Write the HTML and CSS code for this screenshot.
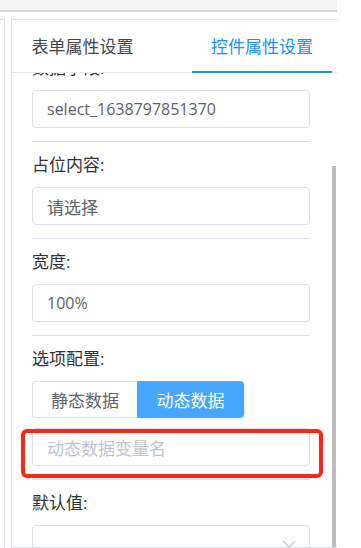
FILE: index.html
```html
<!DOCTYPE html>
<html lang="zh">
<head>
<meta charset="utf-8">
<link rel="stylesheet" href="styles.css">
</head>
<body>
<div class="app">
  <div class="topbar"></div>
  <div class="main">
    <div class="side"></div>
    <div class="panel">
      <div class="tabs">
        <div class="tab">表单属性设置</div>
        <div class="tab active">控件属性设置</div>
      </div>
      <div class="scroll">
        <div class="content">
          <div class="item">
            <div class="label">数据字段:</div>
            <div class="input latin">select_1638797851370</div>
          </div>
          <div class="item">
            <div class="label">占位内容:</div>
            <div class="input">请选择</div>
          </div>
          <div class="item">
            <div class="label">宽度:</div>
            <div class="input latin">100%</div>
          </div>
          <div class="item">
            <div class="label">选项配置:</div>
            <div class="radio-group">
              <div class="radio">静态数据</div>
              <div class="radio on">动态数据</div>
            </div>
            <div class="input placeholder">动态数据变量名</div>
          </div>
          <div class="item">
            <div class="label">默认值:</div>
            <div class="input select">
              <span></span>
              <svg class="chev" width="12" height="7" viewBox="0 0 12 7"><polyline points="0.5,0.5 6,6 11.5,0.5" fill="none" stroke="#c0c4cc" stroke-width="1.2"/></svg>
            </div>
          </div>
        </div>
        <div class="thumb"></div>
      </div>
    </div>
  </div>
</div>
<div class="highlight"></div>
</body>
</html>
```

FILE: styles.css
```css
* { box-sizing: border-box; }
html, body { margin: 0; padding: 0; background: #fff; }
body {
  width: 361px;
  height: 548px;
  overflow: hidden;
  position: relative;
  font-family: "Open Sans", "Noto Sans CJK SC", sans-serif;
  font-size: 17px;
}
.app {
  width: 337px;
  height: 548px;
  overflow: hidden;
}
.topbar {
  height: 12px;
  background: #f5f5f5;
  border-bottom: 2px solid #d3d3d3;
}
.main {
  display: flex;
  margin-top: 7px;
  height: 529px;
}
.side {
  flex: 0 0 5px;
  border-top: 1px solid #dcdfe6;
  border-right: 1px solid #dcdfe6;
  margin-right: 6px;
}
.panel {
  flex: 0 0 340px;
  border: 1px solid #dcdfe6;
  display: flex;
  flex-direction: column;
}
.tabs {
  display: flex;
  height: 53px;
  border-bottom: 1px solid #e4e7ed;
}
.tab {
  height: 53px;
  margin-bottom: -1px;
  padding-top: 4px;
  line-height: 46px;
  text-align: center;
  color: #444;
  border-bottom: 2px solid transparent;
  width: 141px;
}
.tab.active {
  width: 140px;
  margin-left: 39px;
  color: #1890ff;
  border-bottom-color: #1890ff;
}
.scroll {
  flex: 1;
  overflow: hidden;
  position: relative;
}
.content {
  margin-top: -29px;
  padding: 0 20px;
  width: 318px;
}
.item {
  border-top: 1px solid #dcdfe6;
  padding: 11px 0 13px;
}
.item:first-child { border-top-color: transparent; }
.label {
  line-height: 24px;
  height: 24px;
  color: #333;
  margin-bottom: 10px;
}
.input {
  height: 38px;
  border: 1px solid #dcdfe6;
  border-radius: 4px;
  padding: 0 14px;
  display: flex;
  align-items: center;
  color: #606266;
}
.input.latin { font-size: 16px; }
.input.placeholder { color: #c0c4cc; }
.input.select { justify-content: space-between; padding-right: 14px; }
.chev { display: block; margin-top: 1px; }
.radio-group {
  display: flex;
  height: 37px;
  margin-bottom: 10px;
}
.radio {
  width: 105px;
  display: flex;
  align-items: center;
  justify-content: center;
  border: 1px solid #dcdfe6;
  border-right: none;
  border-radius: 4px 0 0 4px;
  color: #606266;
}
.radio.on {
  width: 107px;
  background: #46a6ff;
  border: 1px solid #46a6ff;
  border-radius: 0 4px 4px 0;
  color: #fff;
  box-shadow: 2px 2px 0 0 #eef6ff;
}
.thumb {
  position: absolute;
  left: 320px;
  top: 93px;
  width: 4px;
  height: 400px;
  background: #bcbcbc;
}
.highlight {
  position: absolute;
  left: 21px;
  top: 429px;
  width: 302px;
  height: 49px;
  border: 4px solid #ff2418;
  border-radius: 6px;
}
```
